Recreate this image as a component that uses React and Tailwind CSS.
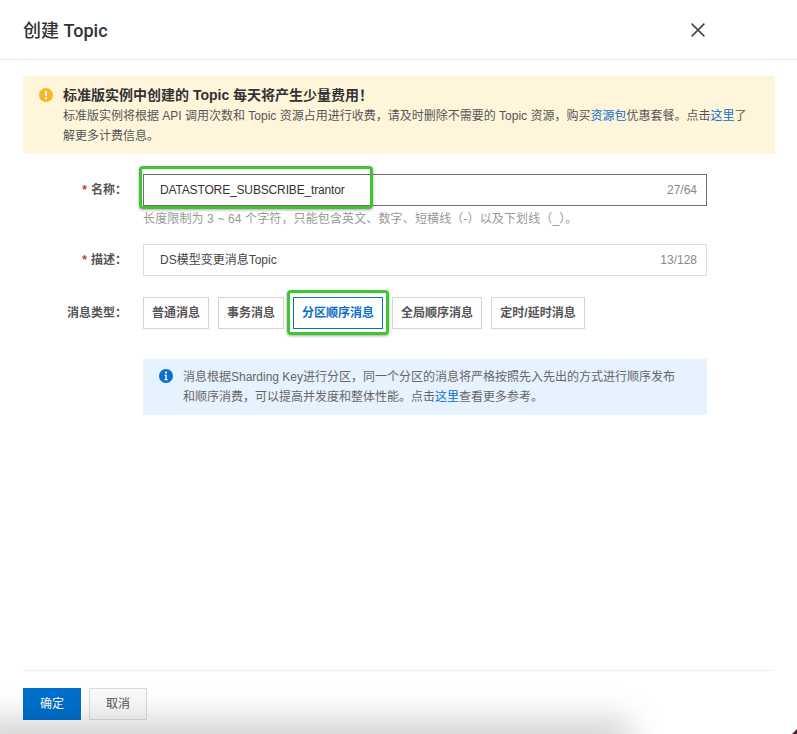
import React from 'react';

const FONT = 'font-["Liberation_Sans","Noto_Sans_CJK_SC",sans-serif]';
const BLUE = 'text-[#0a6fc9]';

function Label({ required, children }) {
  return (
    <label className="mr-4 flex h-8 w-[104px] shrink-0 items-center justify-end text-xs font-bold text-[#555]">
      {required && <span className="mr-1 text-[#d93026]">*</span>}
      {children}
    </label>
  );
}

function TextField({ value, count, active, tight }) {
  return (
    <div className={`flex h-8 w-[564px] items-center justify-between border pl-4 pr-[9px] text-xs ${active ? 'border-[#6f6f6f] text-[#333]' : 'border-[#dcdcdc] text-[#444]'}`}>
      <span className={tight ? 'tracking-[-0.15px]' : ''}>{value}</span>
      <span className="text-[#888]">{count}</span>
    </div>
  );
}

function TypeButton({ label, selected, width }) {
  return (
    <div className="relative">
      <button className={`flex h-8 items-center justify-center border text-xs font-bold ${width} ${selected ? 'border-[#0a6fc9] text-[#0a6fc9]' : 'border-[#d4d4d4] text-[#555]'}`}>
        {label}
      </button>
      {selected && (
        <div className="absolute -inset-x-[6px] -top-[7px] -bottom-[6px] rounded-[4px] border-[3px] border-[#3fc531] shadow-[0_1px_3px_rgba(0,0,0,0.35)]" />
      )}
    </div>
  );
}

export default function App() {
  return (
    <div className={`relative flex h-[734px] w-[797px] flex-col overflow-hidden bg-white ${FONT}`}>
      <header className="flex h-[60px] shrink-0 items-center justify-between border-b border-[#ececec] pl-[23px] pr-[92px]">
        <h1 className="mt-[2px] font-['Roboto','Noto_Sans_CJK_SC',sans-serif] text-lg font-medium text-[#333]">创建 Topic</h1>
        <svg width="14" height="14" viewBox="0 0 14 14" fill="none" stroke="#4a4a4a" strokeWidth="1.7">
          <path d="M.6.6 13.4 13.4M13.4.6.6 13.4" />
        </svg>
      </header>

      <main className="flex-1 pl-[23px] pr-[22px] pt-4">
        <div className="flex h-[78px] gap-[10px] bg-[#fff5da] pl-4 pr-5 pt-[11px]">
          <svg width="14" height="14" viewBox="0 0 14 14" className="mt-[1px] shrink-0">
            <circle cx="7" cy="7" r="7" fill="#f9b52a" />
            <rect x="6" y="2.8" width="2" height="5.4" rx="1" fill="#fff" />
            <circle cx="7" cy="10.2" r="1.1" fill="#fff" />
          </svg>
          <div className="min-w-0">
            <p className="text-sm font-bold leading-4 text-[#333]">标准版实例中创建的 Topic 每天将产生少量费用！</p>
            <p className="mt-[3px] text-xs leading-5 text-[#555]">
              标准版实例将根据 API 调用次数和 Topic 资源占用进行收费，请及时删除不需要的 Topic 资源，购买<a className={BLUE}>资源包</a>优惠套餐。点击<a className={BLUE}>这里</a>了解更多计费信息。
            </p>
          </div>
        </div>

        <div className="mt-5 flex items-start">
          <Label required>名称：</Label>
          <div>
            <div className="relative">
              <TextField value="DATASTORE_SUBSCRIBE_trantor" count="27/64" active tight />
              <div className="absolute -left-[4px] -top-[8px] h-[43px] w-[234px] rounded-[4px] border-[3px] border-[#3fc531] shadow-[0_1px_3px_rgba(0,0,0,0.35)]" />
            </div>
            <p className="mt-[3px] text-xs leading-5 tracking-[0.13px] text-[#999]">长度限制为 3 ~ 64 个字符，只能包含英文、数字、短横线（-）以及下划线（_）。</p>
          </div>
        </div>

        <div className="mt-[15px] flex items-start">
          <Label required>描述：</Label>
          <TextField value="DS模型变更消息Topic" count="13/128" />
        </div>

        <div className="mt-[21px] flex items-start">
          <Label>消息类型：</Label>
          <div className="flex gap-[9px]">
            <TypeButton label="普通消息" width="w-[66px]" />
            <TypeButton label="事务消息" width="w-[66px]" />
            <TypeButton label="分区顺序消息" width="w-[90px]" selected />
            <TypeButton label="全局顺序消息" width="w-[90px]" />
            <TypeButton label="定时/延时消息" width="w-[94px]" />
          </div>
        </div>

        <div className="ml-[120px] mt-[30px] flex h-[56px] w-[564px] gap-[10px] bg-[#e6f2fd] pl-4 pt-2">
          <svg width="14" height="14" viewBox="0 0 14 14" className="mt-[2px] shrink-0">
            <circle cx="7" cy="7" r="7" fill="#0a6fc9" />
            <circle cx="7" cy="3.6" r="1.1" fill="#fff" />
            <path d="M5.4 5.8h2.4v4.4h1v1H5.2v-1h1.2V6.8h-1z" fill="#fff" />
          </svg>
          <p className="w-[496px] text-xs leading-5 text-[#666]">
            消息根据Sharding Key进行分区，同一个分区的消息将严格按照先入先出的方式进行顺序发布和顺序消费，可以提高并发度和整体性能。点击<a className={BLUE}>这里</a>查看更多参考。
          </p>
        </div>
      </main>

      <footer className="mx-[23px] mb-[14px] flex h-[50px] shrink-0 items-end gap-2 border-t border-[#eeeeee]">
        <button className="flex h-8 w-[58px] items-center justify-center bg-[#0070cc] text-xs text-white">确定</button>
        <button className="flex h-8 w-[58px] items-center justify-center border border-[#dcdcdc] bg-[#fafafa] text-xs text-[#555]">取消</button>
      </footer>

      {/* shadow of the window below, bleeding in at the bottom edge */}
      <div className="pointer-events-none absolute -bottom-[22px] -left-[30px] h-[36px] w-[660px] bg-[#00000030] blur-[16px]" />
      <svg width="5" height="5" viewBox="0 0 5 5" className="absolute bottom-0 right-0">
        <path d="M5 0v5H0z" fill="#5a1a2e" />
      </svg>
    </div>
  );
}
